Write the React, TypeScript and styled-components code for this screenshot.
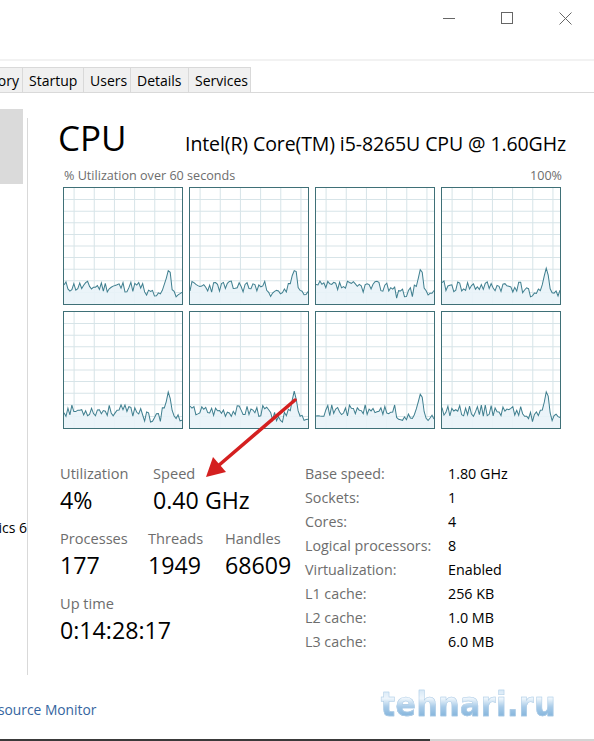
import styled, { createGlobalStyle } from 'styled-components'

const GlobalStyle = createGlobalStyle`
  html, body {
    margin: 0;
    padding: 0;
    background: #ffffff;
  }
  body {
    font-family: "Open Sans", "Noto Sans", "Liberation Sans", sans-serif;
    color: #000000;
  }
`

// Window chrome

const Window = styled.div`
  position: relative;
  width: 594px;
  height: 741px;
  overflow: hidden;
  display: flex;
  flex-direction: column;
  background: #ffffff;
`

const TitleBar = styled.div`
  height: 59px;
  display: flex;
  justify-content: flex-end;
  align-items: flex-start;
  border-bottom: 2px solid #f2f2f2;
`

const ControlButton = styled.div`
  width: 58px;
  height: 36px;
  display: flex;
  align-items: center;
  justify-content: center;
  color: #555555;
`

const TabBar = styled.div`
  height: 25px;
  margin-top: 6px;
  display: flex;
  border-bottom: 1px solid #d9d9d9;
`

const Tab = styled.div<{ $w: number }>`
  width: ${p => p.$w}px;
  box-sizing: border-box;
  height: 25px;
  padding: 0 0 0 6px;
  display: flex;
  align-items: center;
  font-size: 14px;
  background: #f0f0f0;
  border: 1px solid #d9d9d9;
  border-bottom: none;
  border-left: none;
  white-space: nowrap;
  overflow: hidden;

  &.cut {
    justify-content: flex-end;
    padding: 0 3px 0 0;
  }
`

const Body = styled.div`
  flex: 1;
  display: flex;
`

const Sidebar = styled.div`
  width: 27px;
  flex-shrink: 0;
  display: flex;
  flex-direction: column;
  padding-top: 16px;
`

const SidebarSelected = styled.div`
  width: 23px;
  height: 75px;
  background: #dadada;
`

const SidebarText = styled.div`
  margin-top: 334px;
  font-size: 14px;
  white-space: nowrap;
  direction: rtl;
  overflow: hidden;
  width: 27px;
`

const Panel = styled.div`
  flex: 1;
  border-left: 1px solid #d9d9d9;
  margin: 25px 0 14px;
  padding: 0 28px 0 30px;
  display: flex;
  flex-direction: column;
`

const Header = styled.div`
  display: flex;
  justify-content: space-between;
  align-items: baseline;
`

const Title = styled.div`
  font-size: 35px;
  line-height: 40px;
  font-weight: 400;
`

const CpuName = styled.div`
  font-size: 19.5px;
  letter-spacing: -0.1px;
`

const ChartLabels = styled.div`
  display: flex;
  justify-content: space-between;
  margin: 10px 4px 0 6px;
  font-size: 12.6px;
  color: #6d6d6d;
  line-height: 16px;
`

const ChartGrid = styled.div`
  margin: 3px 4px 0 5px;
  display: grid;
  grid-template-columns: repeat(4, 120px);
  grid-auto-rows: 118px;
  gap: 6px;
`

const ChartBox = styled.svg`
  display: block;
  width: 120px;
  height: 118px;
  box-sizing: border-box;
  border: 1.5px solid #3f7077;
  background: #ffffff;
`

// Stats

const StatsArea = styled.div`
  display: flex;
  margin-top: 34px;
`

const StatsLeft = styled.div`
  width: 245px;
  padding-left: 2px;
  display: flex;
  flex-direction: column;
  gap: 11px;
`

const StatRow = styled.div`
  display: flex;
`

const Stat = styled.div<{ $w?: number }>`
  width: ${p => (p.$w ? `${p.$w}px` : 'auto')};
  display: flex;
  flex-direction: column;
`

const StatLabel = styled.div`
  font-size: 14.6px;
  line-height: 20px;
  color: #6d6d6d;
`

const StatValue = styled.div`
  font-size: 23.2px;
  line-height: 34px;
  color: #000000;
`

const InfoTable = styled.div`
  display: grid;
  grid-template-columns: 143px auto;
  grid-auto-rows: 24px;
  align-items: center;
  font-size: 14.3px;
  margin-top: -2px;
`

const InfoLabel = styled.div`
  color: #6d6d6d;
`

const InfoValue = styled.div`
  color: #000000;
`

// Footer

const Footer = styled.div`
  height: 50px;
  display: flex;
  align-items: flex-start;
  justify-content: space-between;
  border-bottom: 2px solid #d4d4d4;
  position: relative;
`

const FooterLink = styled.div`
  font-size: 13.8px;
  color: #3565a0;
  margin-top: 11px;
  margin-left: -2px;
`

const Watermark = styled.div`
  margin: -5px 38px 0 0;
  font-family: "DejaVu Sans", sans-serif;
  font-weight: 700;
  font-size: 30px;
  letter-spacing: 0.5px;
  line-height: 36px;
  transform: scaleY(1.15);
  transform-origin: center top;
  background: linear-gradient(180deg, #c6def2 0%, #eef6fc 35%, #a8cbe8 55%, #8ab8de 75%, #b8d5ee 100%);
  -webkit-background-clip: text;
  background-clip: text;
  color: transparent;
  -webkit-text-stroke: 0.5px #b0cde6;
`

const BottomEdge = styled.div`
  position: absolute;
  left: 0;
  bottom: -2px;
  width: 430px;
  height: 2px;
  background: #3a3a3a;
`

const Annotation = styled.svg`
  position: absolute;
  left: 0;
  top: 0;
  pointer-events: none;
`

// Chart data

const makeSeries = (seed: number) => {
    let s = seed
    const rnd = () => {
        s = (s * 9301 + 49297) % 233280
        return s / 233280
    }
    const points: number[] = []
    for (let i = 0; i < 61; i++) {
        let v = 10 + rnd() * 10
        if (i > 50 && i < 56) {
            const peak = [14, 22, 28, 24, 12][i - 51]
            v = peak + rnd() * 4
        }
        if (i >= 56) v = 6 + rnd() * 6
        if (i > 40 && i < 50) v = 5 + rnd() * 9
        points.push(v)
    }
    return points
}

const Chart = ({ seed }: { seed: number }) => {
    const data = makeSeries(seed)
    const w = 117
    const h = 115
    const pts = data.map((v, i) => `${(i * w) / 60},${h - (v * h) / 100}`)
    const line = pts.join(' ')
    const area = `0,${h} ${line} ${w},${h}`
    const vLines = [10, 30, 50, 70, 90, 110]
    const hLines = Array.from({ length: 9 }, (_, i) => ((i + 1) * h) / 10)
    return (
        <ChartBox viewBox={`0 0 ${w} ${h}`} preserveAspectRatio={'none'}>
            {vLines.map(x => (
                <line key={`v${x}`} x1={x} x2={x} y1={0} y2={h} stroke={'#d7e4e8'} strokeWidth={1} />
            ))}
            {hLines.map(y => (
                <line key={`h${y}`} x1={0} x2={w} y1={y} y2={y} stroke={'#d7e4e8'} strokeWidth={1} />
            ))}
            <polygon points={area} fill={'#e9f3f8'} opacity={0.9} />
            <polyline points={line} fill={'none'} stroke={'#3f7f8f'} strokeWidth={1} />
        </ChartBox>
    )
}

const info: [string, string][] = [
    ['Base speed:', '1.80 GHz'],
    ['Sockets:', '1'],
    ['Cores:', '4'],
    ['Logical processors:', '8'],
    ['Virtualization:', 'Enabled'],
    ['L1 cache:', '256 KB'],
    ['L2 cache:', '1.0 MB'],
    ['L3 cache:', '6.0 MB'],
]

export default () => {
    return (
        <Window>
            <GlobalStyle />
            <TitleBar>
                <ControlButton>
                    <svg width={12} height={12} viewBox={'0 0 12 12'}>
                        <line x1={0} x2={12} y1={6.5} y2={6.5} stroke={'#666'} strokeWidth={1} />
                    </svg>
                </ControlButton>
                <ControlButton>
                    <svg width={12} height={12} viewBox={'0 0 12 12'}>
                        <rect x={0.5} y={0.5} width={11} height={11} fill={'none'} stroke={'#666'} strokeWidth={1} />
                    </svg>
                </ControlButton>
                <ControlButton>
                    <svg width={13} height={13} viewBox={'0 0 13 13'}>
                        <path d={'M0.5 0.5 L12.5 12.5 M12.5 0.5 L0.5 12.5'} stroke={'#666'} strokeWidth={1} />
                    </svg>
                </ControlButton>
            </TitleBar>
            <TabBar>
                <Tab $w={23} className={'cut'}>ory</Tab>
                <Tab $w={61}>Startup</Tab>
                <Tab $w={47}>Users</Tab>
                <Tab $w={58}>Details</Tab>
                <Tab $w={62}>Services</Tab>
            </TabBar>
            <Body>
                <Sidebar>
                    <SidebarSelected />
                    <SidebarText>ics 6</SidebarText>
                </Sidebar>
                <Panel>
                    <Header>
                        <Title>CPU</Title>
                        <CpuName>Intel(R) Core(TM) i5-8265U CPU @ 1.60GHz</CpuName>
                    </Header>
                    <ChartLabels>
                        <span>% Utilization over 60 seconds</span>
                        <span>100%</span>
                    </ChartLabels>
                    <ChartGrid>
                        {[11, 23, 37, 41, 53, 67, 71, 89].map(seed => (
                            <Chart key={seed} seed={seed} />
                        ))}
                    </ChartGrid>
                    <StatsArea>
                        <StatsLeft>
                            <StatRow>
                                <Stat $w={93}>
                                    <StatLabel>Utilization</StatLabel>
                                    <StatValue>4%</StatValue>
                                </Stat>
                                <Stat>
                                    <StatLabel>Speed</StatLabel>
                                    <StatValue>0.40 GHz</StatValue>
                                </Stat>
                            </StatRow>
                            <StatRow>
                                <Stat $w={88}>
                                    <StatLabel>Processes</StatLabel>
                                    <StatValue>177</StatValue>
                                </Stat>
                                <Stat $w={77}>
                                    <StatLabel>Threads</StatLabel>
                                    <StatValue>1949</StatValue>
                                </Stat>
                                <Stat>
                                    <StatLabel>Handles</StatLabel>
                                    <StatValue>68609</StatValue>
                                </Stat>
                            </StatRow>
                            <StatRow>
                                <Stat>
                                    <StatLabel>Up time</StatLabel>
                                    <StatValue>0:14:28:17</StatValue>
                                </Stat>
                            </StatRow>
                        </StatsLeft>
                        <InfoTable>
                            {info.map(([label, value]) => (
                                <>
                                    <InfoLabel key={`l${label}`}>{label}</InfoLabel>
                                    <InfoValue key={`v${label}`}>{value}</InfoValue>
                                </>
                            ))}
                        </InfoTable>
                    </StatsArea>
                </Panel>
            </Body>
            <Footer>
                <FooterLink>source Monitor</FooterLink>
                <Watermark>tehnari.ru</Watermark>
                <BottomEdge />
            </Footer>
            <Annotation width={594} height={741} viewBox={'0 0 594 741'}>
                <line x1={295} y1={400} x2={218} y2={466} stroke={'#d42020'} strokeWidth={3.5} strokeLinecap={'round'} />
                <polygon points={'206,477 213,457 226,472'} fill={'#d42020'} />
            </Annotation>
        </Window>
    )
}
